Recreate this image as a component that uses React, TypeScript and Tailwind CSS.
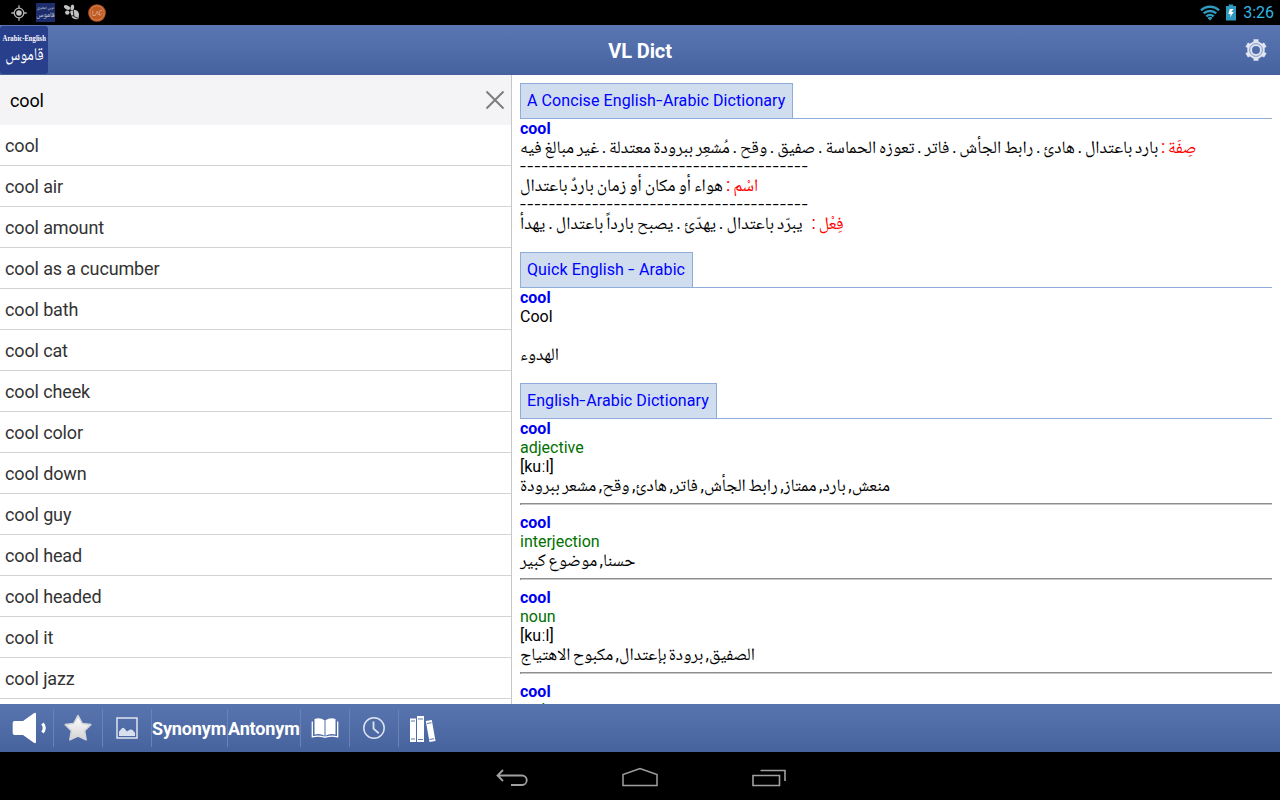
import type { ReactNode } from 'react'

const words = [
  'cool', 'cool air', 'cool amount', 'cool as a cucumber', 'cool bath', 'cool cat', 'cool cheek',
  'cool color', 'cool down', 'cool guy', 'cool head', 'cool headed', 'cool it', 'cool jazz', 'cool jerk',
]

const arabicFont = "font-['Roboto','Noto_Naskh_Arabic','Droid_Arabic_Naskh','Noto_Sans_Arabic','DejaVu_Sans',sans-serif]"

function Arabic({ className = '', children }: { className?: string; children: ReactNode }) {
  return (
    <div className="h-[19px] whitespace-nowrap">
      <span dir="rtl" className={`block w-fit text-[17.6px] whitespace-pre leading-[19px] ${arabicFont} ${className}`}>
        {children}
      </span>
    </div>
  )
}

function Hyphen() {
  return <span className="inline-block w-[7px] origin-left scale-x-[1.45]">-</span>
}

function Dashes() {
  return (
    <div className="h-[19px] w-[215px] origin-left scale-x-[1.332] tracking-[1px] whitespace-nowrap">
      ----------------------------------------
    </div>
  )
}

function Heading({ className = '', children }: { className?: string; children: ReactNode }) {
  return (
    <div className="flex h-9 border-b border-[#8eaddc]">
      <h2 className={`h-[35px] border border-b-0 border-[#8eaddc] bg-[#cfddef] pl-1.5 text-[16px] leading-[34px] tracking-[.08px] whitespace-nowrap text-[#0000ff] ${className}`}>
        {children}
      </h2>
    </div>
  )
}

function Headword() {
  return <div className="h-[19px] font-bold text-[#0000f0]">cool</div>
}

function Rule() {
  return <div className="my-2 h-0.5 border-t border-l border-[#8e8e8e] bg-[#c8c8c8]" />
}

function StatusBar() {
  return (
    <header className="flex h-[25px] items-center justify-between bg-black">
      <div className="flex items-center pl-[11px]">
        <svg width="16" height="16" viewBox="0 0 16 16" fill="none" stroke="#b5b5b5">
          <circle cx="8" cy="8" r="4.8" strokeWidth="1.3" />
          <circle cx="8" cy="8" r="2.8" fill="#c4c4c4" stroke="none" />
          <path d="M8 .3v3M8 12.7v3M.3 8h3M12.7 8h3" strokeWidth="1.3" />
        </svg>
        <div className={`ml-[9px] flex h-[19px] w-[19px] flex-col items-center bg-[#1d2d6c] text-white/80 ${arabicFont}`}>
          <span className="mt-[2px] text-[3.5px] leading-[6px] whitespace-nowrap">عربي انجليزي</span>
          <span className="text-[7px] leading-[8px]">قاموس</span>
        </div>
        <svg className="ml-2" width="17" height="17" viewBox="0 0 17 17" fill="#c2c2c2">
          <ellipse cx="4" cy="3.4" rx="3.3" ry="2" transform="rotate(28 4 3.4)" />
          <ellipse cx="9.3" cy="3.6" rx="1.8" ry="3" transform="rotate(10 9.3 3.6)" />
          <circle cx="4.3" cy="8.6" r="2.2" />
          <path d="m7 7.500 4.500-1.800q4 .8 4.500 4.500l-.5 4.800q-4.500 1-6.500-1.500z" />
          <path d="m10.300 6 .6 6.500 4.600 2M7.500 12.300l3.400-.8" fill="none" stroke="#000" strokeWidth=".8" />
        </svg>
        <svg className="ml-[8px]" width="18" height="18" viewBox="0 0 18 18">
          <circle cx="9" cy="9" r="8.8" fill="#bf5a23" />
          <circle cx="9" cy="9" r="7.1" fill="none" stroke="#d79972" strokeWidth=".6" />
          <path d="M4.800 6.500v5h3M7.500 11l2-4 .7 4M11 11l1-4.500h2.200M10.800 10.700c1.700 1 2.700.2 3-1.200" fill="none" stroke="#e3aa88" strokeWidth=".8" />
        </svg>
      </div>
      <div className="flex items-center pr-1.5 text-[#33b5e5]">
        <svg width="20" height="16" viewBox="0 0 20 16" fill="none" stroke="#3099c0" strokeWidth="2.5">
          <path d="M1 5.300a13.300 13.300 0 0 1 18 0M3.700 8.400a9.300 9.300 0 0 1 12.600 0M6.300 11.400a5.400 5.400 0 0 1 7.400 0" />
          <path d="m10 15.500-2.500-2.600a3.700 3.700 0 0 1 5 0z" fill="#3099c0" stroke="none" />
        </svg>
        <svg className="ml-1.5" width="10" height="17" viewBox="0 0 10 17">
          <path d="M0 2h2.800V.5h4.400V2H10v14.500H0z" fill="#3099c0" />
          <path d="m3.800 5-1.500 5h2.400L3.800 13.500 7.800 8H5.300L7.500 5z" fill="#fff" />
        </svg>
        <span className="ml-[7px] text-[16px] leading-[25px]">3:26</span>
      </div>
    </header>
  )
}

function Gear() {
  return (
    <svg width="24" height="24" viewBox="0 0 24 24" fill="none" stroke="#dfe5f1">
      <g strokeWidth="5">
        <path d="M12 1.300v4M12 18.700v4M2.700 6.700l3.500 2M17.800 15.300l3.500 2M2.700 17.300l3.500-2M17.800 8.700l3.500-2" />
      </g>
      <circle cx="12" cy="12" r="6.400" strokeWidth="4.800" />
      <circle cx="12" cy="12" r="6.400" stroke="#6882b6" strokeWidth=".8" />
    </svg>
  )
}

function AppBar() {
  return (
    <div className="relative flex h-[50px] items-start justify-between border-b border-[#45609a] bg-linear-to-b from-[#5b77b3] to-[#47639f]">
      <div className="mt-px flex h-12 w-12 flex-col items-center rounded-[3px] bg-[#283f8c] text-white">
        <span className="mt-[6px] text-[9px] leading-3 font-bold whitespace-nowrap font-['Liberation_Serif',serif] scale-x-[.74]">Arabic-English</span>
        <span className={`-mt-0.5 text-[18px] leading-6 scale-x-[.82] ${arabicFont}`}>قاموس</span>
      </div>
      <h1 className="absolute inset-x-0 text-center text-[20px] leading-[53px] font-bold tracking-[-.1px] text-white">VL Dict</h1>
      <div className="mt-[13px] mr-3">
        <Gear />
      </div>
    </div>
  )
}

function WordList() {
  return (
    <aside className="w-[512px] shrink-0 overflow-hidden border-r border-[#c6c6cb] bg-white tracking-[-.13px]">
      <div className="flex h-[50px] items-center justify-between bg-[#f4f4f6] pr-1.5 pl-[10px]">
        <span className="text-[18px] text-black">cool</span>
        <svg width="20" height="20" viewBox="0 0 20 20" stroke="#7d7d7d" strokeWidth="2">
          <path d="m1.500 1.500 17 17M18.500 1.500l-17 17" />
        </svg>
      </div>
      <ul>
        {words.map((w) => (
          <li key={w} className="h-[41px] border-b border-[#d3d3d3] pl-[5px] text-[18px] leading-[41px] text-[#333]">{w}</li>
        ))}
      </ul>
    </aside>
  )
}

function Entries() {
  return (
    <main className="min-w-0 flex-1 overflow-hidden bg-white px-2 pt-2 text-[16px] leading-[19px] text-black">
      <Heading className="w-[273px]">A Concise English<Hyphen />Arabic Dictionary</Heading>
      <Headword />
      <Arabic className="[word-spacing:-1.7px]"><span className="text-[#f00]">صِفَة : </span>بارد باعتدال . هادئ . رابط الجأش . فاتر . تعوزه الحماسة . صفيق . وقح . مُشعِر ببرودة معتدلة . غير مبالغ فيه</Arabic>
      <Dashes />
      <Arabic className="[word-spacing:-1.4px]"><span className="text-[#f00]">اسْم : </span>هواء أو مكان أو زمان باردٌ باعتدال</Arabic>
      <Dashes />
      <Arabic className="[word-spacing:-1.4px]"><span className="text-[#f00]">فِعْل : </span>{'  '}يبرّد باعتدال . يهدّئ . يصبح بارداً باعتدال . يهدأ</Arabic>
      <div className="h-[19px]" />
      <Heading className="w-[173px]">Quick English <Hyphen /> Arabic</Heading>
      <Headword />
      <div>Cool</div>
      <div className="h-[19px]" />
      <Arabic>الهدوء</Arabic>
      <div className="h-[19px]" />
      <Heading className="w-[197px]">English<Hyphen />Arabic Dictionary</Heading>
      <Headword />
      <div className="text-[#007000]">adjective</div>
      <div>[kuːl]</div>
      <Arabic className="[word-spacing:-1.9px]">منعش, بارد, ممتاز, رابط الجأش, فاتر, هادئ, وقح, مشعر ببرودة</Arabic>
      <Rule />
      <Headword />
      <div className="text-[#007000]">interjection</div>
      <Arabic className="[word-spacing:-2px]">حسنا, موضوع كبير</Arabic>
      <Rule />
      <Headword />
      <div className="text-[#007000]">noun</div>
      <div>[kuːl]</div>
      <Arabic className="[word-spacing:-2.2px]">الصفيق, برودة بإعتدال, مكبوح الاهتياج</Arabic>
      <Rule />
      <Headword />
      <div className="-mt-px text-[#007000]">verb</div>
    </main>
  )
}

function Divider() {
  return <div className="h-[38px] w-px bg-[#6983b7]" />
}

function Toolbar() {
  return (
    <div className="flex h-12 items-center bg-linear-to-b from-[#5975b0] to-[#47639e] text-[18px] font-bold text-white">
      <div className="flex w-[53px] pl-3">
        <svg width="36" height="32" viewBox="0 0 36 32" fill="#fff">
          <path d="M2.500 9H11L21.500 1.500Q24 0 24 2v28q0 2-2.500.5L11 23H2.500Q.7 23 .7 21V11Q.7 9 2.500 9z" />
          <path d="M30.500 11.500q3.500 4.500 0 9" fill="none" stroke="#fff" strokeWidth="3" />
        </svg>
      </div>
      <Divider />
      <div className="flex w-12 justify-center">
        <svg width="28" height="28" viewBox="0 0 28 28">
          <defs>
            <linearGradient id="star" x1="0" y1="0" x2="0" y2="1">
              <stop stopColor="#fff" />
              <stop offset="1" stopColor="#d4d4d4" />
            </linearGradient>
          </defs>
          <path d="m14 1.500 4.200 8 8.500 1.100-6.100 6.200 1.500 9-8.100-3.800-8.100 3.800 1.500-9-6.100-6.200 8.500-1.100z" fill="url(#star)" stroke="#d5d6da" strokeWidth="1.600" strokeLinejoin="round" />
        </svg>
      </div>
      <Divider />
      <div className="flex w-12 justify-center">
        <svg width="22" height="22" viewBox="0 0 22 22">
          <path d="M1 1h20v20H1z" fill="none" stroke="#dfe5f1" strokeWidth="1.500" />
          <path d="M3 19v-4.500l3-3.300q1.200-.8 2.500.2l2.500 3 3-1.800q1.400-.5 2.500.5l2.500 2.700V19z" fill="#d8dfee" />
        </svg>
      </div>
      <Divider />
      <span className="w-[75px] tracking-[-.15px] whitespace-nowrap">Synonym</span>
      <Divider />
      <span className="w-[72px] tracking-[-.15px] whitespace-nowrap">Antonym</span>
      <Divider />
      <div className="flex w-12 justify-center">
        <svg width="28" height="22" viewBox="0 0 28 22" fill="#fff">
          <path d="M13.500 3.300Q9 .2 3.500 2v15.500q5.500-1.500 10 1.200zM14.500 3.300Q19 .2 24.500 2v15.500q-5.500-1.500-10 1.200z" />
          <path d="M1.300 4.500v15.300q6.500-1.500 11.500.2h2.400q5-1.700 11.500-.2V4.500" fill="none" stroke="#fff" strokeWidth="1.300" />
        </svg>
      </div>
      <Divider />
      <div className="flex w-12 justify-center">
        <svg width="24" height="24" viewBox="0 0 24 24" fill="none" stroke="#dde4f1">
          <circle cx="12" cy="12" r="10.200" strokeWidth="1.500" />
          <path d="M11.500 5.500v7.200l5.300 4.600" strokeWidth="1.800" />
        </svg>
      </div>
      <Divider />
      <div className="flex w-12 justify-center pt-0.5">
        <svg width="28" height="28" viewBox="0 0 28 28">
          <path d="M1 3.500h6V27H1zM8 1h7v26H8zM16.800 6l6-1 3.700 21-6 1z" fill="#fff" />
          <path d="M2 6h4M2 24h4M9 4h5M9 24.500h5M18 8.500l4.500-.8M20.500 24.500l4.500-.8" stroke="#5d77af" strokeWidth="1" />
        </svg>
      </div>
    </div>
  )
}

function NavBar() {
  return (
    <nav className="flex h-12 items-center justify-center gap-[92px] bg-black pt-0.5">
      <svg width="36" height="24" viewBox="0 0 36 24" fill="none" stroke="#a0a0a0" strokeWidth="1.800">
        <path d="M10 5 4.500 10.500l5.500 5.500M4.500 10.500H29a4.700 4.700 0 0 1 0 9.500H18" />
      </svg>
      <svg width="38" height="24" viewBox="0 0 38 24" fill="none" stroke="#a0a0a0" strokeWidth="1.500">
        <path d="M2 20.500V9.500L19 3.500l17 6v11z" />
      </svg>
      <svg width="36" height="24" viewBox="0 0 36 24" fill="none" stroke="#a0a0a0" strokeWidth="1.600">
        <path d="M2 10.500h26.500v10H2zM9.500 5.500H34V16" />
      </svg>
    </nav>
  )
}

export default function App() {
  return (
    <div className="flex h-[800px] w-[1280px] flex-col overflow-hidden bg-black font-['Roboto',sans-serif]">
      <StatusBar />
      <AppBar />
      <div className="flex h-[629px] overflow-hidden">
        <WordList />
        <Entries />
      </div>
      <Toolbar />
      <NavBar />
    </div>
  )
}
